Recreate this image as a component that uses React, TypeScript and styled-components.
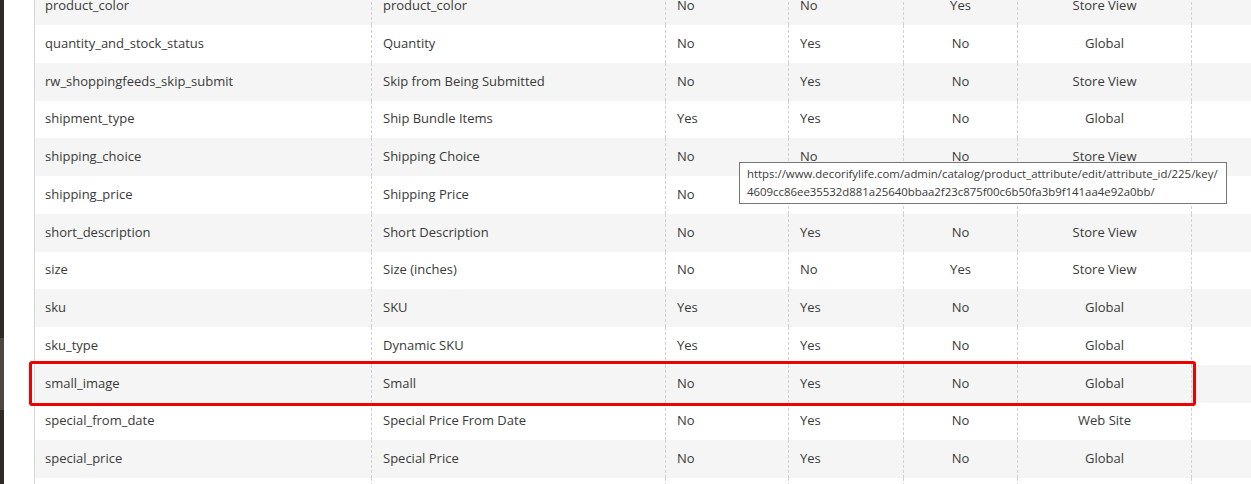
import * as React from 'react';
import styled, { createGlobalStyle } from 'styled-components';

const GlobalStyle = createGlobalStyle`
  html, body {
    margin: 0;
    padding: 0;
    background: #ffffff;
  }
`;

const ROW_HEIGHT = 37.75;

const rows = [
  ['product_color', 'product_color', 'No', 'No', 'Yes', 'Store View'],
  ['quantity_and_stock_status', 'Quantity', 'No', 'Yes', 'No', 'Global'],
  ['rw_shoppingfeeds_skip_submit', 'Skip from Being Submitted', 'No', 'Yes', 'No', 'Store View'],
  ['shipment_type', 'Ship Bundle Items', 'Yes', 'Yes', 'No', 'Global'],
  ['shipping_choice', 'Shipping Choice', 'No', 'No', 'No', 'Store View'],
  ['shipping_price', 'Shipping Price', 'No', 'Yes', 'No', 'Store View'],
  ['short_description', 'Short Description', 'No', 'Yes', 'No', 'Store View'],
  ['size', 'Size (inches)', 'No', 'No', 'Yes', 'Store View'],
  ['sku', 'SKU', 'Yes', 'Yes', 'No', 'Global'],
  ['sku_type', 'Dynamic SKU', 'Yes', 'Yes', 'No', 'Global'],
  ['small_image', 'Small', 'No', 'Yes', 'No', 'Global'],
  ['special_from_date', 'Special Price From Date', 'No', 'Yes', 'No', 'Web Site'],
  ['special_price', 'Special Price', 'No', 'Yes', 'No', 'Global'],
  ['special_to_date', 'Special Price To Date', 'No', 'Yes', 'No', 'Web Site'],
];

const Page = styled.div`
  position: relative;
  display: flex;
  height: 484px;
  overflow: hidden;
  font-family: 'Open Sans', 'Noto Sans', sans-serif;
`;

const Sidebar = styled.div`
  width: 4px;
  flex: none;
  display: flex;
  flex-direction: column;
`;

const SidebarPart = styled.div<{ $height?: number; $light?: boolean }>`
  flex: ${p => (p.$height ? 'none' : '1')};
  height: ${p => (p.$height ? `${p.$height}px` : 'auto')};
  background: ${p => (p.$light ? '#4d4642' : '#2e2a28')};
`;

const Content = styled.div`
  flex: 1;
  padding-left: 30px;
  overflow: hidden;
`;

const Grid = styled.div`
  width: 1400px;
  margin-top: -12.75px;
  border-left: 1px solid #d6d6d6;
`;

const Row = styled.div<{ $striped: boolean }>`
  display: grid;
  grid-template-columns: 336px 294px 123px 115px 114px 174px 1fr;
  height: ${ROW_HEIGHT}px;
  background: ${p => (p.$striped ? '#f5f5f5' : '#ffffff')};
`;

const Cell = styled.div<{ $center?: boolean; $first?: boolean }>`
  display: flex;
  align-items: center;
  justify-content: ${p => (p.$center ? 'center' : 'flex-start')};
  padding-left: ${p => (p.$center ? '0' : p.$first ? '10px' : '11px')};
  padding-bottom: 2px;
  border-left: ${p => (p.$first ? 'none' : '1px dashed #d1d1d1')};
  font-size: 13px;
  color: #3a3a3a;
  white-space: nowrap;
`;

const Tooltip = styled.div`
  position: absolute;
  left: 739px;
  top: 162px;
  width: 472px;
  padding: 2px 7px;
  background: #ffffff;
  border: 1px solid #767676;
  font-family: 'Open Sans', 'Noto Sans', sans-serif;
  font-size: 11.4px;
  line-height: 18px;
  color: #3a3a3a;
`;

const TooltipLine = styled.div`
  white-space: nowrap;
`;

const Highlight = styled.div`
  position: absolute;
  left: 29px;
  top: 361px;
  width: 1167px;
  height: 45px;
  box-sizing: border-box;
  border: 3px solid #ec0000;
  border-radius: 3px;
  pointer-events: none;
`;

export default function App() {
  return (
    <>
      <GlobalStyle />
      <Page>
        <Sidebar>
          <SidebarPart $height={338} />
          <SidebarPart $height={72} $light />
          <SidebarPart />
        </Sidebar>
        <Content>
          <Grid>
            {rows.map((r, i) => (
              <Row key={r[0]} $striped={i % 2 === 0}>
                <Cell $first>{r[0]}</Cell>
                <Cell>{r[1]}</Cell>
                <Cell>{r[2]}</Cell>
                <Cell>{r[3]}</Cell>
                <Cell $center>{r[4]}</Cell>
                <Cell $center>{r[5]}</Cell>
                <Cell />
              </Row>
            ))}
          </Grid>
        </Content>
        <Tooltip>
          <TooltipLine>
            https://www.decorifylife.com/admin/catalog/product_attribute/edit/attribute_id/225/key/
          </TooltipLine>
          <TooltipLine>4609cc86ee35532d881a25640bbaa2f23c875f00c6b50fa3b9f141aa4e92a0bb/</TooltipLine>
        </Tooltip>
        <Highlight />
      </Page>
    </>
  );
}
